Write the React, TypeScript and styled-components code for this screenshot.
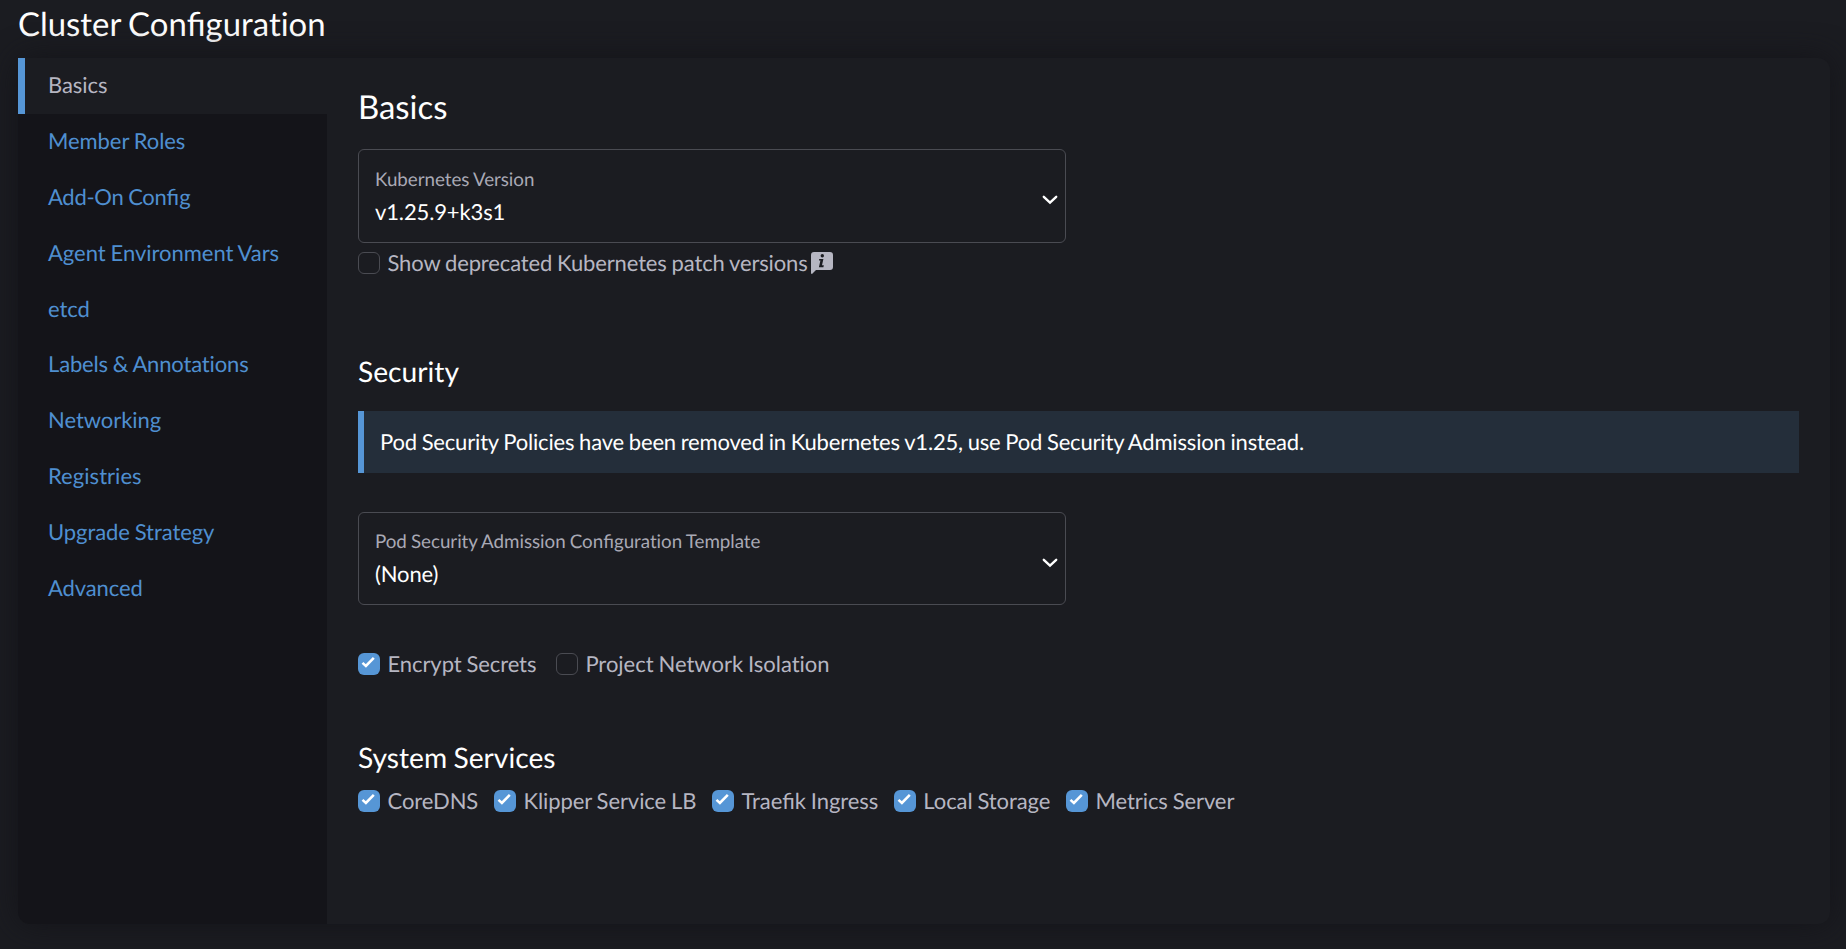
import React from 'react';
import styled, { createGlobalStyle } from 'styled-components';

const GlobalStyle = createGlobalStyle`
  * { box-sizing: border-box; word-spacing: -0.03em; }
  body {
    margin: 0;
    background: #1b1c21;
    color: #ffffff;
    font-family: Lato, "Liberation Sans", sans-serif;
    font-size: 22px;
    font-variant-ligatures: none;
    text-rendering: geometricPrecision;
    -webkit-font-smoothing: antialiased;
  }
`;

const Page = styled.main`
  height: 949px;
  padding: 0 16px 25px 18px;
  overflow: hidden;
  display: flex;
  flex-direction: column;
`;

const PageTitle = styled.h2`
  margin: 0;
  height: 58px;
  padding-top: 6px;
  font-size: 32.9px;
  font-weight: 400;
  line-height: 38px;
`;

const Panel = styled.section`
  flex: 1;
  display: flex;
  border-radius: 12px;
  background: #1b1c21;
  box-shadow: 0 0 31px #141419;
`;

const TabList = styled.nav`
  width: 309px;
  display: flex;
  flex-direction: column;
  background: #141419;
  border-radius: 0 0 0 12px;
`;

const Tab = styled.a<{ $active?: boolean; $track: number }>`
  height: 55.9px;
  padding-left: ${(p) => (p.$active ? 23 : 30)}px;
  border-left: ${(p) => (p.$active ? '7px solid #5696d6' : '0')};
  background: ${(p) => (p.$active ? '#1b1c21' : 'transparent')};
  color: ${(p) => (p.$active ? '#b6b6c2' : '#4f8fd0')};
  letter-spacing: ${(p) => p.$track}px;
  line-height: 53px;
`;

const Content = styled.div`
  flex: 1;
  padding: 31px 31px 0;
  display: flex;
  flex-direction: column;
`;

const Heading = styled.h3<{ $size: number; $gap: number }>`
  margin: 0 0 ${(p) => p.$gap}px;
  font-size: ${(p) => p.$size}px;
  font-weight: 400;
  line-height: 38px;
`;

const SelectBox = styled.div<{ $height: number }>`
  width: 708px;
  height: ${(p) => p.$height}px;
  padding: 0 7px 0 16px;
  display: flex;
  align-items: center;
  justify-content: space-between;
  border: 1px solid #4a4b52;
  border-radius: 6px;
`;

const SelectLabel = styled.div`
  padding-top: 1px;
  color: #a9a9b5;
  font-size: 18.8px;
  letter-spacing: -0.04px;
  line-height: 30px;
`;

const SelectValue = styled.div`
  line-height: 34px;
  letter-spacing: -0.13px;
`;

const Chevron = styled.svg`
  margin-top: 8px;
`;

const CheckRow = styled.div<{ $top: number; $gap: number }>`
  margin-top: ${(p) => p.$top}px;
  display: flex;
  gap: ${(p) => p.$gap}px;
`;

const CheckItem = styled.label`
  height: 24px;
  display: flex;
  align-items: center;
  color: #b6b6c2;
`;

const CheckText = styled.span<{ $track: number }>`
  letter-spacing: ${(p) => p.$track}px;
  line-height: 26px;
`;

const CheckMark = styled.span<{ $on?: boolean }>`
  width: 22px;
  height: 22px;
  margin-right: 7.5px;
  display: flex;
  border: ${(p) => (p.$on ? '0' : '1px solid #4a4b52')};
  border-radius: 6px;
  background: ${(p) => (p.$on ? '#5696d6' : 'transparent')};
`;

const InfoIcon = styled.svg`
  margin-left: 3px;
`;

const Banner = styled.div`
  height: 62px;
  padding-left: 16px;
  border-left: 6px solid #5696d6;
  background: #242e3a;
  letter-spacing: -0.18px;
  line-height: 62px;
`;

const Block = styled.div<{ $top: number }>`
  margin-top: ${(p) => p.$top}px;
`;

const Joined = styled.span`
  font-variant-ligatures: common-ligatures;
  letter-spacing: 0;
`;

const tabs = [
  { name: 'Basics', track: -0.08 },
  { name: 'Member Roles', track: -0.07 },
  { name: 'Add-On Config', track: -0.28 },
  { name: 'Agent Environment Vars', track: -0.03 },
  { name: 'etcd', track: -0.05 },
  { name: 'Labels & Annotations', track: -0.15 },
  { name: 'Networking', track: -0.05 },
  { name: 'Registries', track: 0.04 },
  { name: 'Upgrade Strategy', track: -0.07 },
  { name: 'Advanced', track: -0.1 },
];

const services = ['CoreDNS', 'Klipper Service LB', 'Traefik Ingress', 'Local Storage', 'Metrics Server'];

// Only the "fi" pair is set as a ligature; Lato's "ti" ligature stays off.
function Text({ children }: { children: string }) {
  return (
    <span>
      {children.split(/(fi)/).map((part, i) => (part === 'fi' ? <Joined key={i}>fi</Joined> : part))}
    </span>
  );
}

interface CheckProps {
  on?: boolean;
  label: string;
  track?: number;
  children?: React.ReactNode;
}

function Check({ on, label, track = -0.08, children }: CheckProps) {
  return (
    <CheckItem>
      <CheckMark $on={on}>
        {on && (
          <svg width="22" height="22" viewBox="0 0 22 22" fill="none">
            <path d="M4.5 9.9 L7.9 12.9 L15.8 4.9" stroke="#fff" strokeWidth="2.6" />
          </svg>
        )}
      </CheckMark>
      <CheckText $track={track}><Text>{label}</Text></CheckText>
      {children}
    </CheckItem>
  );
}

function Select({ label, value, height }: { label: string; value: string; height: number }) {
  return (
    <SelectBox $height={height}>
      <div>
        <SelectLabel><Text>{label}</Text></SelectLabel>
        <SelectValue>{value}</SelectValue>
      </div>
      <Chevron width="16" height="10" viewBox="0 0 16 10" fill="none">
        <path d="M1.8 1.8 L8 7.6 L14.2 1.8" stroke="#fff" strokeWidth="2.4" strokeLinecap="round" />
      </Chevron>
    </SelectBox>
  );
}

export default function App() {
  return (
    <>
      <GlobalStyle />
      <Page>
        <PageTitle><Text>Cluster Configuration</Text></PageTitle>
        <Panel>
          <TabList>
            {tabs.map((t, i) => (
              <Tab key={t.name} $active={i === 0} $track={t.track}><Text>{t.name}</Text></Tab>
            ))}
          </TabList>
          <Content>
            <Heading $size={32.9} $gap={22}>Basics</Heading>
            <Select label="Kubernetes Version" value="v1.25.9+k3s1" height={94} />
            <CheckRow $top={8} $gap={20}>
              <Check label="Show deprecated Kubernetes patch versions" track={-0.13}>
                <InfoIcon width="22" height="22" viewBox="0 0 22 22">
                  <path d="M3 0H19Q22 0 22 3V15Q22 18 19 18H5L1 22Q0 22 0 21V3Q0 0 3 0Z" fill="#b6b6c2" />
                  <circle cx="11.3" cy="3.8" r="1.7" fill="#1b1c21" />
                  <path d="M8.2 7H12.4L11 13.3H12.8L12.4 15.2H7.9L9.4 8.4H8Z" fill="#1b1c21" />
                </InfoIcon>
              </Check>
            </CheckRow>
            <Block $top={78}>
              <Heading $size={28.2} $gap={20}>Security</Heading>
              <Banner>Pod Security Policies have been removed in Kubernetes v1.25, use Pod Security Admission instead.</Banner>
            </Block>
            <Block $top={39}>
              <Select label="Pod Security Admission Configuration Template" value="(None)" height={93} />
            </Block>
            <CheckRow $top={47} $gap={19.5}>
              <Check on label="Encrypt Secrets" />
              <Check label="Project Network Isolation" track={-0.02} />
            </CheckRow>
            <Block $top={63}>
              <Heading $size={28.2} $gap={0}>System Services</Heading>
            </Block>
            <CheckRow $top={12} $gap={15.7}>
              {services.map((s) => (
                <Check key={s} on label={s} />
              ))}
            </CheckRow>
          </Content>
        </Panel>
      </Page>
    </>
  );
}
